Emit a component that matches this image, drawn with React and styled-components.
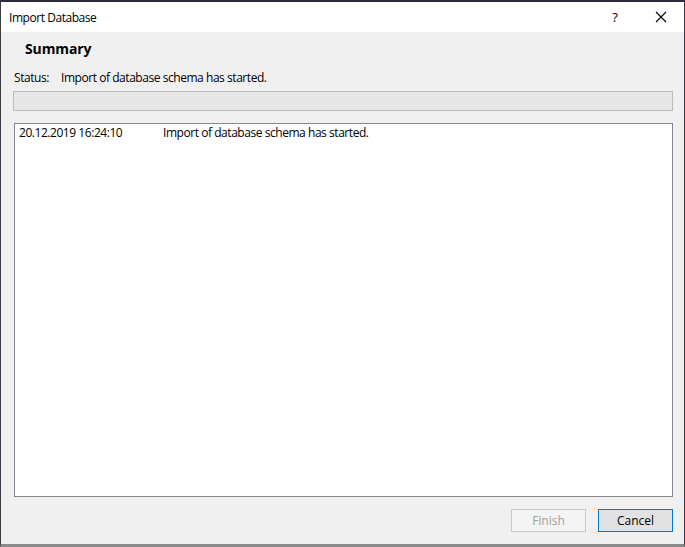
import styled, { createGlobalStyle } from 'styled-components';

const GlobalStyle = createGlobalStyle`
 html, body {
  margin: 0;
  padding: 0;
  background: #f0f0f0;
 }
 body {
  font-family: 'Open Sans', 'Noto Sans', sans-serif;
  font-size: 12px;
  color: #000;
 }
`;

const Window = styled.div`
 box-sizing: border-box;
 width: 685px;
 height: 547px;
 display: flex;
 flex-direction: column;
 background: #f0f0f0;
 border-top: 2px solid #2b2d3c;
 border-left: 1px solid #3a3a44;
 border-right: 1px solid #3a3a44;
 border-bottom: 3px solid #8a8a8a;
`;

const TitleBar = styled.div`
 height: 30px;
 display: flex;
 align-items: center;
 background: #fff;
 padding-left: 8px;
`;

const Title = styled.div`
 flex: 1;
 font-size: 12px;
 letter-spacing: -0.45px;
`;

const TitleButton = styled.div`
 width: 46px;
 height: 30px;
 display: flex;
 align-items: center;
 justify-content: center;
 font-size: 13px;
`;

const Body = styled.div`
 flex: 1;
 display: flex;
 flex-direction: column;
 padding: 0 11px 0 12px;
`;

const Heading = styled.h1`
 margin: 0;
 height: 33px;
 display: flex;
 align-items: center;
 padding-left: 12px;
 font-size: 14px;
 font-weight: 700;
 letter-spacing: -0.1px;
`;

const StatusRow = styled.div`
 height: 24px;
 display: flex;
 align-items: center;
 padding-left: 1px;
 letter-spacing: -0.45px;
`;

const StatusLabel = styled.span`
 width: 47px;
`;

const Progress = styled.div`
 margin-top: 2px;
 height: 18px;
 background: #e6e6e6;
 border: 1px solid #bcbcbc;
`;

const LogList = styled.div`
 box-sizing: border-box;
 margin: 12px 0 0 1px;
 height: 374px;
 background: #fff;
 border: 1px solid #828790;
 padding: 0 4px;
`;

const LogRow = styled.div`
 display: flex;
 height: 16px;
 align-items: center;
 letter-spacing: -0.45px;
`;

const LogTime = styled.span`
 width: 144px;
`;

const Footer = styled.div`
 display: flex;
 justify-content: flex-end;
 gap: 12px;
 margin-top: 12px;
`;

const Button = styled.button`
 box-sizing: border-box;
 width: 75px;
 height: 23px;
 font-family: inherit;
 font-size: 12px;
 padding: 0;
 color: ${p => (p.disabled ? '#a0a0a0' : '#000')};
 background: ${p => (p.disabled ? '#f4f4f4' : '#e1e1e1')};
 border: 1px solid ${p => (p.$primary ? '#0078d7' : '#c8c8c8')};
`;

function CloseIcon() {
 return (
  <svg width="12" height="12" viewBox="0 0 12 12">
   <path d="M1 1 L11 11 M11 1 L1 11" stroke="#000" strokeWidth="1.1" fill="none" />
  </svg>
 );
}

export default function App() {
 return (
  <>
   <GlobalStyle />
   <Window>
    <TitleBar>
     <Title>Import Database</Title>
     <TitleButton>?</TitleButton>
     <TitleButton>
      <CloseIcon />
     </TitleButton>
    </TitleBar>
    <Body>
     <Heading>Summary</Heading>
     <StatusRow>
      <StatusLabel>Status:</StatusLabel>
      <span>Import of database schema has started.</span>
     </StatusRow>
     <Progress />
     <LogList>
      <LogRow>
       <LogTime>20.12.2019 16:24:10</LogTime>
       <span>Import of database schema has started.</span>
      </LogRow>
     </LogList>
     <Footer>
      <Button disabled>Finish</Button>
      <Button $primary>Cancel</Button>
     </Footer>
    </Body>
   </Window>
  </>
 );
}
